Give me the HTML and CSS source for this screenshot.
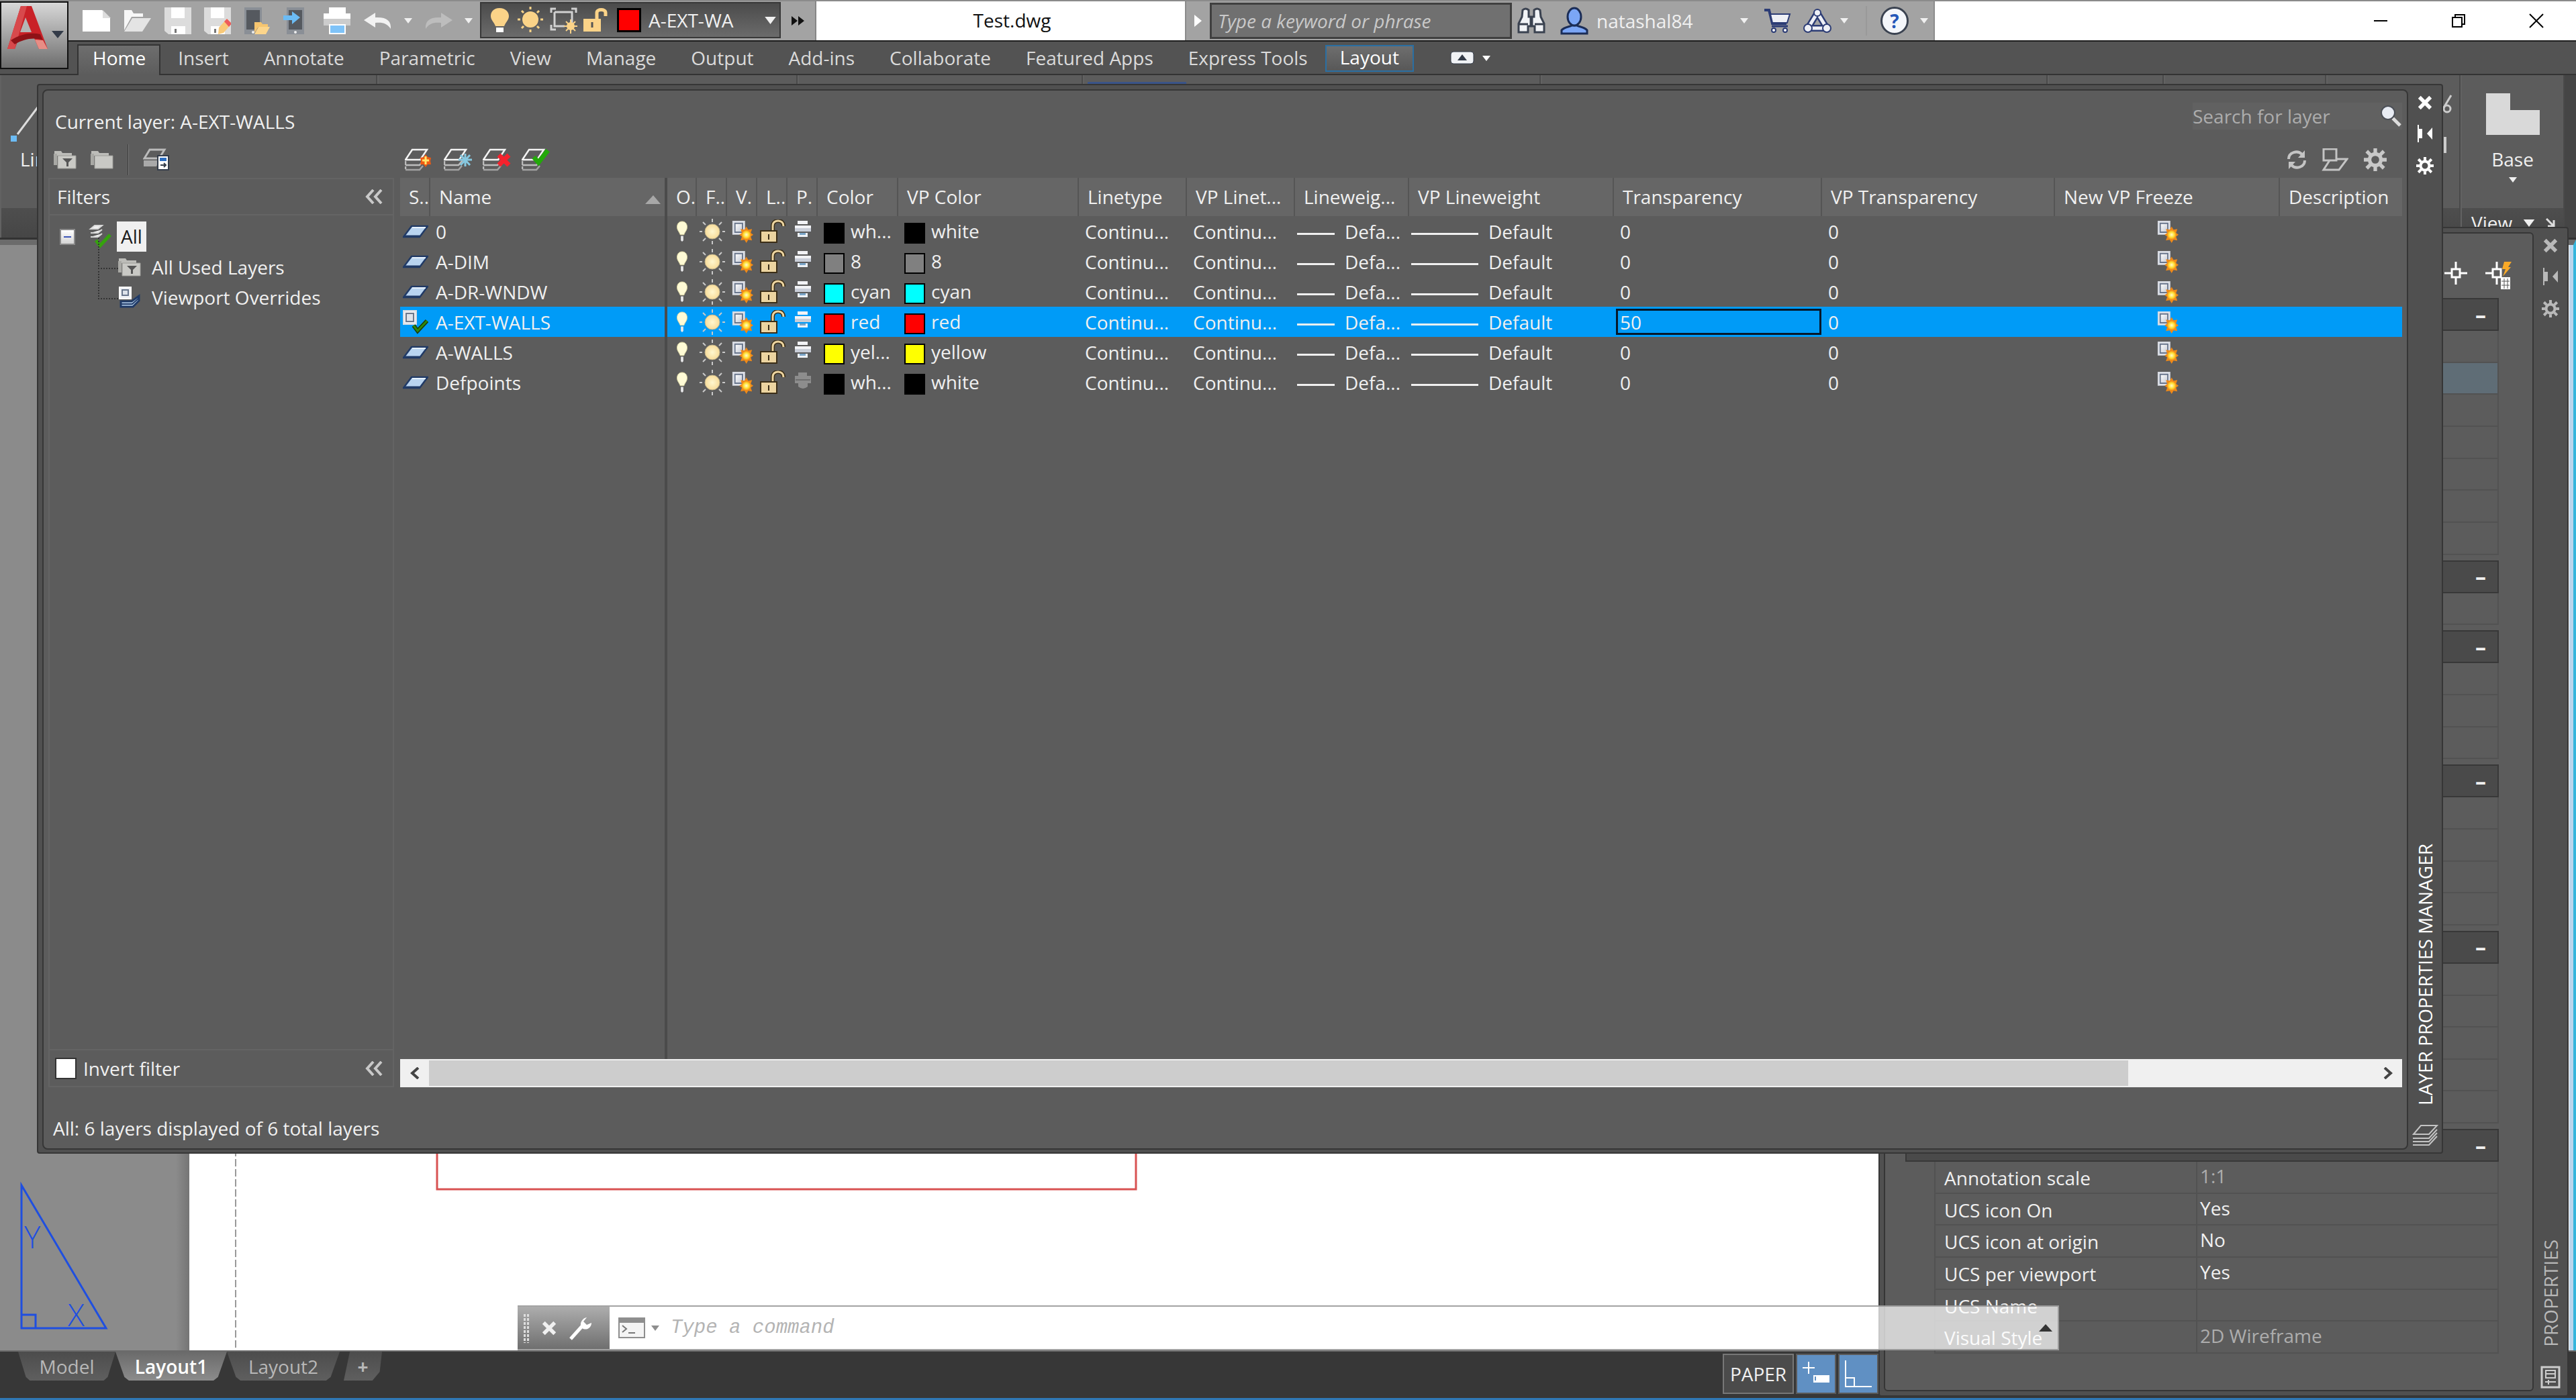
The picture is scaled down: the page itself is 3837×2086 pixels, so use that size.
FILE: index.html
```html
<!DOCTYPE html>
<html lang="en">
<head>
<meta charset="utf-8">
<title>Test.dwg</title>
<link rel="stylesheet" href="styles.css">
</head>
<body>
<svg class="sprite" aria-hidden="true">
  <defs>
    <radialGradient id="g-sun"><stop offset="0" stop-color="#fff7cf"/><stop offset="1" stop-color="#f8dc9a"/></radialGradient>
    <radialGradient id="g-fire"><stop offset="0" stop-color="#fffbd0"/><stop offset=".6" stop-color="#ffe135"/><stop offset="1" stop-color="#f59a1c"/></radialGradient>
    <linearGradient id="g-page" x1="0" y1="0" x2="1" y2="1"><stop offset="0" stop-color="#ffffff"/><stop offset="1" stop-color="#c4c9d4"/></linearGradient>
  </defs>
  <symbol id="i-layer" viewBox="0 0 38 20"><path d="M1 18L13 2H37L25 18Z" fill="#b9d4f0" stroke="#203a66" stroke-width="2.500"/><path d="M3 17H25" stroke="#203a66" stroke-width="3"/><path d="M14 4H34" stroke="#e6f1fc" stroke-width="2"/></symbol>
  <symbol id="i-current" viewBox="0 0 38 36"><path d="M1 1H20V21H1Z" fill="#eceef2" stroke="#d9dce2" stroke-width="2"/><path d="M5 5H16V17H5Z" fill="#dfe3ea" stroke="#6d788c" stroke-width="2"/><path d="M16 23L22 31L36 16" fill="none" stroke="#1d3a08" stroke-width="6"/><path d="M16 23L22 31L36 16" fill="none" stroke="#2f8a0c" stroke-width="3"/></symbol>
  <symbol id="i-bulb" viewBox="0 0 20 34"><path d="M10 1C4 1 2 6 2 10C2 15 6 18 7 22H13C14 18 18 15 18 10C18 6 16 1 10 1Z" fill="#fffbd6" stroke="#d8d2a0"/><path d="M8 24H12V31L10 33L8 31Z" fill="#e8e8ea"/></symbol>
  <symbol id="i-sun" viewBox="0 0 38 38"><g stroke="#c9c9c9" stroke-width="2"><path d="M19 0V5M19 33V38M0 19H4M34 19H38M5 5L9 9M29 29L33 33M5 33L9 29M29 9L33 5"/></g><circle cx="19" cy="19" r="11" fill="url(#g-sun)" stroke="#bdb08a"/></symbol>
  <symbol id="i-vp" viewBox="0 0 34 36"><path d="M2 2H20V22H2Z" fill="#eceef2" stroke="#d6dae2" stroke-width="2"/><path d="M5 5H17V19H5Z" fill="url(#g-page)" stroke="#68758c" stroke-width="2"/><path d="M23 10L26 15L32 14L30 20L34 23L30 26L32 32L26 31L23 36L20 31L14 32L16 26L12 23L16 20L14 14L20 15Z" fill="#f08a18"/><circle cx="23" cy="23" r="7" fill="url(#g-fire)"/></symbol>
  <symbol id="i-lock" viewBox="0 0 40 36"><path d="M20 17V10C20 4 24 2 28 2C33 2 36 5 36 10" fill="none" stroke="#3b2e17" stroke-width="6"/><path d="M20 17V10C20 4 24 2 28 2C33 2 36 5 36 10" fill="none" stroke="#ecd4a0" stroke-width="3"/><path d="M2 17H26V34H2Z" fill="#ecd4a0" stroke="#3b2e17" stroke-width="2"/><path d="M14 22V30" stroke="#3b2e17" stroke-width="2"/></symbol>
  <symbol id="i-plot" viewBox="0 0 26 26"><path d="M5 0H20V5H5ZM1 7H25V16H1Z" fill="#f2f3f6"/><path d="M1 11H25V16H1Z" fill="#c9ced8"/><path d="M5 18H20V24H5Z" fill="#eef2f6"/><path d="M8 18H17V21H8Z" fill="#7aa5c8"/></symbol>
  <symbol id="i-noplot" viewBox="0 0 26 26"><path d="M6 1H19V6H25V17H20V22Q13 28 6 22V17H1V6H6Z" fill="#8d8d8d"/><path d="M2 12H24" stroke="#6d6d6d" stroke-width="2"/></symbol>
  <symbol id="i-stack" viewBox="0 0 42 34"><g fill="none" stroke-width="2.500"><path d="M1 32H22L27 26" stroke="#a3a3a3"/><path d="M1 25H22L28 18" stroke="#bdbdbd"/><path d="M1 17L11 2H33L23 17Z" stroke="#f4f4f4"/><path d="M1 19V25M1 27V31" stroke="#bbb"/></g></symbol>
  <symbol id="i-folder" viewBox="0 0 34 28"><path d="M1 1H11L13 4H27V8H1Z" fill="#bdbdb9"/><path d="M0 5H5V22H0Z" fill="#a9a9a5"/><path d="M6 8H33V27H6Z" fill="#c9c9c5" stroke="#9c9c98"/></symbol>
  <symbol id="i-filter" viewBox="0 0 34 28"><use href="#i-folder"/><path d="M13 12H28L22 18V24H19V18Z" fill="#555"/></symbol>
  <symbol id="i-chev" viewBox="0 0 26 22"><path d="M12 1L3 11L12 21M24 1L15 11L24 21" fill="none" stroke="#c9c9c9" stroke-width="4"/></symbol>
  <symbol id="i-x" viewBox="0 0 24 24"><path d="M3 3L21 21M21 3L3 21" stroke="currentColor" stroke-width="6"/></symbol>
  <symbol id="i-pin" viewBox="0 0 24 26"><path d="M2 0V26" stroke="currentColor" stroke-width="2"/><path d="M3 6H8V20H3ZM23 4V22L15 13Z" fill="currentColor"/></symbol>
  <symbol id="i-gear" viewBox="0 0 32 32"><circle cx="16" cy="16" r="8" fill="none" stroke="currentColor" stroke-width="5"/><path d="M16 0V6M16 26V32M0 16H6M26 16H32M4 4L9 9M23 23L28 28M4 28L9 23M23 9L28 4" stroke="currentColor" stroke-width="5"/></symbol>
  <symbol id="i-down" viewBox="0 0 12 8"><path d="M0 0H12L6 8Z" fill="currentColor"/></symbol>
  <symbol id="i-save" viewBox="0 0 40 40"><path d="M0 0H40V40H6L0 35Z" fill="#dcdcdc"/><path d="M10 0H30V16H10ZM10 28H31V40H10Z" fill="#fff"/><path d="M15 32H18V38H15Z" fill="#777"/></symbol>
  <symbol id="i-phone" viewBox="0 0 40 40"><path d="M1 0H27V40H1Z" fill="#8a8f96"/><path d="M4 4H24V33H4Z" fill="#55595f"/><circle cx="14" cy="37" r="2" fill="#eee"/></symbol>
</svg>

<div class="app">
  <header class="titlebar">
    <div class="quick">
      <button class="ib" aria-label="New"><svg width="42" height="32" viewBox="0 0 42 32"><path d="M0 0H29L41 12V32H0Z" fill="#fff"/><path d="M30 0L42 12H30Z" fill="#ddd"/></svg></button>
      <button class="ib" aria-label="Open"><svg width="42" height="32" viewBox="0 0 42 32"><path d="M1 0H12L15 5H29V10H12L1 30Z" fill="#f7f7f7"/><path d="M13 12H41L28 32H1Z" fill="#e4e4e4"/></svg></button>
      <button class="ib" aria-label="Save"><svg width="40" height="40"><use href="#i-save"/></svg></button>
      <button class="ib" aria-label="Save as"><svg width="40" height="40" viewBox="0 0 40 40"><use href="#i-save"/><path d="M22 30L34 17L41 24L29 38L21 40Z" fill="#f9c978"/><path d="M30 21L34 17L41 24L37 29Z" fill="#ee5c5c"/></svg></button>
      <button class="ib" aria-label="Open from mobile"><svg width="40" height="40" viewBox="0 0 40 40"><use href="#i-phone"/><path d="M16 22H26L28 25H36V29H22L16 38Z" fill="#f6c56f"/><path d="M22 29H39L33 40H16Z" fill="#fcd58b"/></svg></button>
      <button class="ib" aria-label="Save to mobile"><svg width="40" height="40" viewBox="0 0 40 40"><use href="#i-phone" x="4"/><path d="M0 12H13V6L25 15L13 25V19H0Z" fill="#6cbcf5"/></svg></button>
      <button class="ib" aria-label="Plot"><svg width="42" height="40" viewBox="0 0 42 40"><path d="M9 0H34V12H9Z" fill="#fff"/><path d="M1 9H41V27H1Z" fill="#fff"/><path d="M1 17H41V27H1Z" fill="#ccc"/><path d="M9 25H34V40H9Z" fill="#fff"/><path d="M11 27H32V38H11Z" fill="#7fc3f8"/></svg></button>
      <button class="ib" aria-label="Undo"><svg width="42" height="24" viewBox="0 0 42 24"><path d="M0 11L17 0V7C34 6 41 12 40 24C34 15 27 14 17 15V22Z" fill="#f2f2f2"/></svg></button>
      <button class="ib mini" aria-label="Undo list"><svg width="12" height="8"><use href="#i-down"/></svg></button>
      <button class="ib" aria-label="Redo"><svg width="42" height="24" viewBox="0 0 42 24"><path d="M42 11L25 0V7C8 6 1 12 2 24C8 15 15 14 25 15V22Z" fill="#bdbdbd"/></svg></button>
      <button class="ib mini" aria-label="Redo list"><svg width="12" height="8"><use href="#i-down"/></svg></button>
    </div>
    <button class="layer-combo">
      <svg width="176" height="40" viewBox="0 0 176 40"><path d="M13 2C4 2 0 8 0 14C0 20 5 23 7 29H20C22 23 27 20 27 14C27 8 22 2 13 2Z" fill="#fbd388"/><path d="M8 31H19V38H8Z" fill="#fff"/><g transform="translate(59 19)"><circle r="12" fill="#fbd388"/><path d="M0-19V-15M0 15V19M-19 0H-15M15 0H19M-13-13L-10-10M13 13L10 10M-13 13L-10 10M13-13L10-10" stroke="#fbd388" stroke-width="3"/></g><path d="M90 9V3H97M120 3H127V9M90 27V34H97M95 8H121V24M95 8V29H110" fill="none" stroke="#d0d0d0" stroke-width="3"/><circle cx="119" cy="29" r="6" fill="#fbd388"/><path d="M119 19V40M109 29H129M112 22L126 36M126 22L112 36" stroke="#fbd388" stroke-width="2"/><path d="M158 20V9C158 3 171 3 171 9V14" fill="none" stroke="#fbd388" stroke-width="5"/><path d="M138 18H164V37H138Z" fill="#fbd388"/><path d="M151 23V31" stroke="#555" stroke-width="3"/></svg>
      <span class="big-swatch"></span><span class="combo-name">A-EXT-WA</span><svg class="combo-arrow" width="19" height="11"><use href="#i-down"/></svg>
    </button>
    <button class="ib more" aria-label="More"><svg width="20" height="14" viewBox="0 0 20 14"><path d="M0 0L9 7L0 14ZM10 0L19 7L10 14Z" fill="#111"/></svg></button>
    <h1 class="doc-title">Test.dwg</h1>
    <div class="infocenter">
      <svg width="11" height="18" viewBox="0 0 11 18"><path d="M0 0L11 9L0 18Z" fill="#fff"/></svg>
      <input class="help-search" type="text" placeholder="Type a keyword or phrase" aria-label="Type a keyword or phrase">
      <button class="ib" aria-label="Search"><svg width="42" height="40" viewBox="0 0 42 40"><g fill="#f1f3f6" stroke="#3a4250" stroke-width="3"><path d="M8 4Q12 0 17 4V14H20V28H16V37H2V24L7 14ZM34 4Q30 0 25 4V14H22V28H26V37H40V24L35 14Z"/><path d="M2 25H16M26 25H40"/></g></svg></button>
      <button class="user"><svg width="42" height="42" viewBox="0 0 42 42"><path d="M2 40V35C6 30 14 30 17 28H25C28 30 36 30 40 35V40Z" fill="#7ba6f6" stroke="#1b2d57" stroke-width="3"/><ellipse cx="21" cy="15" rx="10" ry="13" fill="#7ba6f6" stroke="#1b2d57" stroke-width="3"/></svg><span>natashal84</span><svg class="push" width="12" height="8"><use href="#i-down"/></svg></button>
      <button class="ib" aria-label="App store"><svg width="42" height="36" viewBox="0 0 42 36"><g stroke="#2c3c75" stroke-width="2"><path d="M1 2H8L13 22H34" fill="none" stroke-width="4"/><path d="M10 8H39L35 21H13Z" fill="#eef0f6"/><path d="M12 26H36" stroke-width="3"/><circle cx="15" cy="32" r="3" fill="#fff"/><circle cx="32" cy="32" r="3" fill="#fff"/></g></svg></button>
      <button class="ib pair" aria-label="Stay connected"><svg width="42" height="36" viewBox="0 0 42 36"><path d="M21 6L35 29H7Z" fill="none" stroke="#2c3c75" stroke-width="10" stroke-linejoin="round"/><path d="M21 6L35 29H7Z" fill="none" stroke="#eef0f6" stroke-width="5" stroke-linejoin="round"/><g fill="#eef0f6" stroke="#2c3c75" stroke-width="2"><circle cx="21" cy="6" r="5"/><circle cx="7" cy="29" r="6"/><circle cx="35" cy="29" r="6"/></g></svg><svg width="12" height="8"><use href="#i-down"/></svg></button>
      <i class="ic-sep"></i>
      <button class="help" aria-label="Help"><span>?</span><svg width="12" height="8"><use href="#i-down"/></svg></button>
    </div>
    <div class="window-buttons">
      <button class="ib" aria-label="Minimize"><svg width="22" height="22" viewBox="0 0 22 22"><path d="M1 11H21" stroke="#000" stroke-width="2"/></svg></button>
      <button class="ib" aria-label="Restore"><svg width="22" height="22" viewBox="0 0 22 22"><path d="M2 6H16V20H2ZM6 6V2H20V16H16" fill="none" stroke="#000" stroke-width="2"/></svg></button>
      <button class="ib" aria-label="Close"><svg width="22" height="22" viewBox="0 0 22 22"><path d="M1 1L21 21M21 1L1 21" stroke="#000" stroke-width="2"/></svg></button>
    </div>
  </header>

  <nav class="tabs">
    <a class="tab active" href="#home">Home</a><a class="tab" href="#insert">Insert</a><a class="tab" href="#annotate">Annotate</a><a class="tab" href="#parametric">Parametric</a><a class="tab" href="#view">View</a><a class="tab" href="#manage">Manage</a><a class="tab" href="#output">Output</a><a class="tab" href="#addins">Add-ins</a><a class="tab" href="#collaborate">Collaborate</a><a class="tab" href="#apps">Featured Apps</a><a class="tab" href="#express">Express Tools</a><a class="tab context" href="#layout">Layout</a>
    <button class="ribbon-toggle" aria-label="Minimize ribbon"><svg width="60" height="24" viewBox="0 0 60 24"><rect x="1" y="3" width="34" height="18" rx="4" fill="#f0f2f5" stroke="#333b48"/><path d="M11 16H25L18 7Z" fill="#333b48"/><path d="M48 9H60L54 17Z" fill="#fff"/></svg></button>
  </nav>

  <button class="app-menu" aria-label="Application menu"><svg width="98" height="98" viewBox="0 0 98 98"><path d="M29 5H45L69 69H56L49 53H26L20 69H9Z" fill="#c92127"/><path d="M29 5H38L20 69H9Z" fill="#d8494c"/><path d="M36 22L45 44H28Z" fill="#b5b5b5"/><path d="M14 56C30 46 45 44 58 47L62 56C48 51 34 54 20 62Z" fill="#8f1217"/><path d="M56 69L50 55L62 56L69 69Z" fill="#e78d85"/><path d="M75 42H93L84 53Z" fill="#333b48"/></svg></button>

  <section class="ribbon">
    <div class="panel draw"><svg width="60" height="64" viewBox="0 0 60 64"><path d="M10 52L40 12" stroke="#ddd" stroke-width="3"/><path d="M0 54H9V63H0Z" fill="#6cbcf5"/></svg><span>Line</span></div>
    <div class="panel"></div><div class="panel"></div><div class="panel layers"><i></i></div><div class="panel"></div><div class="panel"></div><div class="panel"></div>
    <div class="panel clip"><svg width="16" height="92" viewBox="0 0 16 92"><path d="M0 24L12 4" stroke="#ccc" stroke-width="3"/><circle cx="6" cy="24" r="5" fill="none" stroke="#ccc" stroke-width="3"/><path d="M1 66H5V90H1Z" fill="#ccc"/></svg></div>
    <div class="panel base"><svg width="80" height="62" viewBox="0 0 80 62"><path d="M0 0H36V25H80V62H0Z" fill="#d9d9d9"/></svg><span>Base</span><svg width="12" height="8"><use href="#i-down"/></svg><div class="panel-title">View <svg width="18" height="11"><use href="#i-down"/></svg><svg width="14" height="14" viewBox="0 0 14 14"><path d="M1 1L12 12M12 3V12H3" fill="none" stroke="#ddd" stroke-width="3"/></svg></div></div>
  </section>

  <main class="canvas">
    <div class="desk"><svg width="170" height="300" viewBox="0 0 170 300"><g fill="none" stroke="#1f4fe0" stroke-width="3"><path d="M32 54V267H158ZM32 247H53V267"/></g><g class="ucs"><text x="36" y="148">Y</text><text x="101" y="264">X</text></g></svg></div>
    <div class="paper"><svg width="1500" height="300" viewBox="0 0 1500 300"><path d="M69 0V300" stroke="#999" stroke-width="2" stroke-dasharray="11 4"/><path d="M369 0V60H1410V0" fill="none" stroke="#d85252" stroke-width="3"/></svg></div>
  </main>

  <footer class="statusbar">
    <div class="layout-tabs">
      <button class="ltab">Model</button><button class="ltab on">Layout1</button><button class="ltab">Layout2</button><button class="ltab plus">+</button>
    </div>
    <div class="status-tools">
      <button class="paper-btn">PAPER</button>
      <button class="blue" aria-label="Dynamic input"><svg width="44" height="40" viewBox="0 0 44 40"><path d="M11 2V20M2 11H20" stroke="#fff" stroke-width="2"/><path d="M18 22H42V33H18Z" fill="#fff"/><path d="M21 24V30" stroke="#6090c3" stroke-width="2"/></svg></button>
      <button class="blue" aria-label="Ortho mode"><svg width="44" height="40" viewBox="0 0 44 40"><path d="M3 0V39H42M3 26H16V39" fill="none" stroke="#fff" stroke-width="2"/></svg></button>
    </div>
  </footer>

  <aside class="palette properties">
    <div class="props-body">
      <div class="props-tools">
        <svg width="34" height="34" viewBox="0 0 34 34"><path d="M17 0V11M17 23V34M0 17H11M23 17H34M11 11H23V23H11Z" fill="none" stroke="#fff" stroke-width="3"/></svg>
        <svg width="42" height="44" viewBox="0 0 42 44"><path d="M17 0V11M17 23V34M0 17H11M11 11H23V23H11Z" fill="none" stroke="#fff" stroke-width="3"/><path d="M28 0H39L34 8H38L26 22L30 11H25Z" fill="#f8a928"/><path d="M23 23H37V41H23Z" fill="#fff"/><path d="M24 29H36M24 35H36M28 25V40M33 25V40" stroke="#555"/></svg>
      </div>
      <div class="props-list">
        <div class="sec"><button aria-label="Collapse">–</button></div>
        <div class="row"></div><div class="row hl"></div><div class="row"></div><div class="row"></div><div class="row"></div><div class="row"></div><div class="row"></div>
        <div class="sec"><button aria-label="Collapse">–</button></div>
        <div class="row"></div>
        <div class="sec"><button aria-label="Collapse">–</button></div>
        <div class="row"></div><div class="row"></div><div class="row"></div>
        <div class="sec"><button aria-label="Collapse">–</button></div>
        <div class="row"></div><div class="row"></div><div class="row"></div><div class="row"></div>
        <div class="sec"><button aria-label="Collapse">–</button></div>
        <div class="row"></div><div class="row"></div><div class="row"></div><div class="row"></div><div class="row"></div>
        <div class="sec"><button aria-label="Collapse">–</button></div>
        <div class="row"><span>Annotation scale</span><span class="dim">1:1</span></div>
        <div class="row"><span>UCS icon On</span><span>Yes</span></div>
        <div class="row"><span>UCS icon at origin</span><span>No</span></div>
        <div class="row"><span>UCS per viewport</span><span>Yes</span></div>
        <div class="row"><span>UCS Name</span><span></span></div>
        <div class="row"><span>Visual Style</span><span class="dim">2D Wireframe</span></div>
      </div>
    </div>
    <div class="side">
      <button class="ib" aria-label="Close"><svg width="24" height="22"><use href="#i-x"/></svg></button>
      <button class="ib" aria-label="Auto-hide"><svg width="24" height="26"><use href="#i-pin"/></svg></button>
      <button class="ib" aria-label="Options"><svg width="26" height="26"><use href="#i-gear"/></svg></button>
      <span class="side-title">PROPERTIES</span>
      <svg width="30" height="34" viewBox="0 0 30 34"><path d="M2 2H28V32H2Z" fill="none" stroke="#ccc" stroke-width="3"/><path d="M8 7H22V18H8ZM8 12H22M7 24H23M12 21V28" fill="none" stroke="#ccc" stroke-width="2"/></svg>
    </div>
  </aside>

  <form class="command">
    <div class="grip"><i class="dots"></i><svg width="24" height="22"><use href="#i-x"/></svg><svg width="36" height="36" viewBox="0 0 36 36"><path d="M3 34L20 15" stroke="#fff" stroke-width="5"/><path d="M27 2L22 8L27 13L34 10C34 18 26 22 20 18C15 12 20 3 27 2Z" fill="#fff"/></svg></div>
    <svg width="40" height="31" viewBox="0 0 40 31"><path d="M1 1H39V30H1Z" fill="#f4f4f4" stroke="#8e8e8e" stroke-width="2"/><path d="M1 1H39V8H1Z" fill="#8e8e8e"/><path d="M6 12L12 17L6 22M15 23H25" fill="none" stroke="#777" stroke-width="2"/></svg>
    <svg class="grey" width="12" height="8"><use href="#i-down"/></svg>
    <input type="text" placeholder="Type a command" aria-label="Command">
    <button type="button" class="ib" aria-label="History"><svg width="20" height="11" viewBox="0 0 20 11"><path d="M0 11H20L10 0Z" fill="#333"/></svg></button>
  </form>

  <section class="palette manager">
    <div class="mgr-body">
      <div class="mgr-top">
        <p>Current layer: A-EXT-WALLS</p>
        <label class="layer-search"><input type="text" placeholder="Search for layer" aria-label="Search for layer"><svg width="34" height="34" viewBox="0 0 34 34"><path d="M20 20L31 31" stroke="#ddd" stroke-width="5"/><circle cx="13" cy="12" r="10" fill="#e8ecf4" stroke="#4c5058" stroke-width="2"/></svg></label>
      </div>
      <div class="mgr-tools">
        <div class="tools-left">
          <button class="ib" aria-label="New property filter"><svg width="34" height="28"><use href="#i-filter"/></svg></button>
          <button class="ib" aria-label="New group filter"><svg width="34" height="28"><use href="#i-folder"/></svg></button>
          <i class="tool-sep"></i>
          <button class="ib" aria-label="Layer states"><svg width="42" height="34" viewBox="0 0 42 34"><path d="M10 2H32L24 15H2Z" fill="none" stroke="#bbb" stroke-width="3"/><path d="M1 18H24L20 27H1Z" fill="#a9a9a9"/><path d="M22 11H38V32H22Z" fill="#fff" stroke="#333c4a" stroke-width="2"/><path d="M25 14H35V19H25Z" fill="#2b6cc0"/><path d="M26 25H34M31 22L34 25L31 28" fill="none" stroke="#333c4a" stroke-width="2"/></svg></button>
        </div>
        <div class="tools-mid">
          <button class="ib" aria-label="New layer"><svg width="42" height="34" viewBox="0 0 42 34"><use href="#i-stack" width="42" height="34"/><path d="M31 9L34 13L39 14L38 19L39 24L34 24L31 28L28 24L23 24L24 19L23 14L28 13Z" fill="#ee5a12"/><path d="M31 12V24M26 18H36" stroke="#ffe66b" stroke-width="3"/></svg></button>
          <button class="ib" aria-label="New frozen layer"><svg width="42" height="34" viewBox="0 0 42 34"><use href="#i-stack" width="42" height="34"/><path d="M32 8V27M22 17H42M25 10L39 25M39 10L25 25" stroke="#86c8e0" stroke-width="3"/></svg></button>
          <button class="ib" aria-label="Delete layer"><svg width="42" height="34" viewBox="0 0 42 34"><use href="#i-stack" width="42" height="34"/><path d="M24 10L39 25M39 10L24 25" stroke="#f5222d" stroke-width="7"/></svg></button>
          <button class="ib" aria-label="Set current"><svg width="42" height="34" viewBox="0 0 42 34"><use href="#i-stack" width="42" height="34"/><path d="M18 13L25 21L39 3" fill="none" stroke="#23a80a" stroke-width="7"/></svg></button>
        </div>
        <div class="tools-right">
          <button class="ib" aria-label="Refresh"><svg width="30" height="30" viewBox="0 0 30 30"><path d="M3 14C3 4 16 0 23 7M27 16C27 26 14 30 7 23" fill="none" stroke="#c4c4c4" stroke-width="4"/><path d="M27 1V12H17ZM3 29V18H13Z" fill="#c4c4c4"/></svg></button>
          <button class="ib" aria-label="Viewport overrides"><svg width="40" height="34" viewBox="0 0 40 34"><path d="M3 1H22V18H3ZM22 16H38L26 32H3L12 18" fill="none" stroke="#c4c4c4" stroke-width="3"/></svg></button>
          <button class="ib light" aria-label="Settings"><svg width="36" height="34"><use href="#i-gear"/></svg></button>
        </div>
      </div>
      <div class="mgr-main">
        <div class="filters">
          <div class="f-head"><span>Filters</span><button class="ib" aria-label="Collapse filters"><svg width="28" height="22"><use href="#i-chev"/></svg></button></div>
          <ul class="tree">
            <li><i class="expander"></i><svg width="36" height="36" viewBox="0 0 36 36"><path d="M3 6L9 1H20L14 6ZM3 12H14L20 7M3 18H14L20 13" fill="#f0f0f0" stroke="#d8d8d8" stroke-width="2"/><path d="M11 23L17 31L32 15" fill="none" stroke="#35a30d" stroke-width="5"/></svg><b>All</b></li>
            <li class="child"><svg width="34" height="28"><use href="#i-filter"/></svg><span>All Used Layers</span></li>
            <li class="child"><svg width="34" height="34" viewBox="0 0 34 34"><path d="M2 2H19V19H2Z" fill="#eef0f4" stroke="#fff" stroke-width="2"/><path d="M6 6H15V14H6Z" fill="#dde2ea" stroke="#68758c" stroke-width="2"/><path d="M4 23H20L31 15V22L22 31H4Z" fill="#b9d4f0" stroke="#203a66" stroke-width="3"/><path d="M4 27H21L31 18" fill="none" stroke="#203a66" stroke-width="2"/></svg><span>Viewport Overrides</span></li>
          </ul>
          <div class="f-foot"><label><input type="checkbox">Invert filter</label><button class="ib" aria-label="Collapse tree"><svg width="28" height="22"><use href="#i-chev"/></svg></button></div>
        </div>
        <div class="grid">
          <div class="table-wrap">
          <table>
            <colgroup><col class="c45"><col class="c-name"><col class="c44"><col class="c45"><col class="c45"><col class="c45"><col class="c45"><col class="c-color"><col class="c-vpcolor"><col class="c-lt"><col class="c-lt"><col class="c-lw"><col class="c-vplw"><col class="c-tr"><col class="c-vptr"><col class="c-frz"><col></colgroup>
            <thead><tr><th>S..</th><th class="name">Name<svg width="23" height="13" viewBox="0 0 23 13"><path d="M0 13H23L12 0Z" fill="#a8a8a8"/></svg></th><th>O.</th><th>F..</th><th>V.</th><th>L..</th><th>P.</th><th>Color</th><th>VP Color</th><th>Linetype</th><th>VP Linet...</th><th>Lineweig...</th><th>VP Lineweight</th><th>Transparency</th><th>VP Transparency</th><th>New VP Freeze</th><th>Description</th></tr></thead>
            <tbody>
            <tr><td class="ic"><svg width="38" height="20"><use href="#i-layer"/></svg></td><td class="name">0</td><td class="ic"><svg width="20" height="32"><use href="#i-bulb"/></svg></td><td class="ic"><svg width="38" height="38"><use href="#i-sun"/></svg></td><td class="ic"><svg width="34" height="34"><use href="#i-vp"/></svg></td><td class="ic"><svg width="40" height="36"><use href="#i-lock"/></svg></td><td class="ic up"><svg width="26" height="26"><use href="#i-plot"/></svg></td><td><i class="sw black"></i>wh...</td><td><i class="sw black"></i>white</td><td>Continu...</td><td>Continu...</td><td><i class="ln"></i>Defa...</td><td><i class="ln long"></i>Default</td><td>0</td><td>0</td><td class="ic"><svg width="34" height="34"><use href="#i-vp"/></svg></td><td></td></tr>
            <tr><td class="ic"><svg width="38" height="20"><use href="#i-layer"/></svg></td><td class="name">A-DIM</td><td class="ic"><svg width="20" height="32"><use href="#i-bulb"/></svg></td><td class="ic"><svg width="38" height="38"><use href="#i-sun"/></svg></td><td class="ic"><svg width="34" height="34"><use href="#i-vp"/></svg></td><td class="ic"><svg width="40" height="36"><use href="#i-lock"/></svg></td><td class="ic up"><svg width="26" height="26"><use href="#i-plot"/></svg></td><td><i class="sw gray"></i>8</td><td><i class="sw gray"></i>8</td><td>Continu...</td><td>Continu...</td><td><i class="ln"></i>Defa...</td><td><i class="ln long"></i>Default</td><td>0</td><td>0</td><td class="ic"><svg width="34" height="34"><use href="#i-vp"/></svg></td><td></td></tr>
            <tr><td class="ic"><svg width="38" height="20"><use href="#i-layer"/></svg></td><td class="name">A-DR-WNDW</td><td class="ic"><svg width="20" height="32"><use href="#i-bulb"/></svg></td><td class="ic"><svg width="38" height="38"><use href="#i-sun"/></svg></td><td class="ic"><svg width="34" height="34"><use href="#i-vp"/></svg></td><td class="ic"><svg width="40" height="36"><use href="#i-lock"/></svg></td><td class="ic up"><svg width="26" height="26"><use href="#i-plot"/></svg></td><td><i class="sw cyan"></i>cyan</td><td><i class="sw cyan"></i>cyan</td><td>Continu...</td><td>Continu...</td><td><i class="ln"></i>Defa...</td><td><i class="ln long"></i>Default</td><td>0</td><td>0</td><td class="ic"><svg width="34" height="34"><use href="#i-vp"/></svg></td><td></td></tr>
            <tr class="selected"><td class="ic"><svg width="38" height="36"><use href="#i-current"/></svg></td><td class="name">A-EXT-WALLS</td><td class="ic"><svg width="20" height="32"><use href="#i-bulb"/></svg></td><td class="ic"><svg width="38" height="38"><use href="#i-sun"/></svg></td><td class="ic"><svg width="34" height="34"><use href="#i-vp"/></svg></td><td class="ic"><svg width="40" height="36"><use href="#i-lock"/></svg></td><td class="ic up"><svg width="26" height="26"><use href="#i-plot"/></svg></td><td><i class="sw red"></i>red</td><td><i class="sw red"></i>red</td><td>Continu...</td><td>Continu...</td><td><i class="ln"></i>Defa...</td><td><i class="ln long"></i>Default</td><td class="edit"><input type="text" value="50" aria-label="Transparency"></td><td>0</td><td class="ic"><svg width="34" height="34"><use href="#i-vp"/></svg></td><td></td></tr>
            <tr><td class="ic"><svg width="38" height="20"><use href="#i-layer"/></svg></td><td class="name">A-WALLS</td><td class="ic"><svg width="20" height="32"><use href="#i-bulb"/></svg></td><td class="ic"><svg width="38" height="38"><use href="#i-sun"/></svg></td><td class="ic"><svg width="34" height="34"><use href="#i-vp"/></svg></td><td class="ic"><svg width="40" height="36"><use href="#i-lock"/></svg></td><td class="ic up"><svg width="26" height="26"><use href="#i-plot"/></svg></td><td><i class="sw yellow"></i>yel...</td><td><i class="sw yellow"></i>yellow</td><td>Continu...</td><td>Continu...</td><td><i class="ln"></i>Defa...</td><td><i class="ln long"></i>Default</td><td>0</td><td>0</td><td class="ic"><svg width="34" height="34"><use href="#i-vp"/></svg></td><td></td></tr>
            <tr><td class="ic"><svg width="38" height="20"><use href="#i-layer"/></svg></td><td class="name">Defpoints</td><td class="ic"><svg width="20" height="32"><use href="#i-bulb"/></svg></td><td class="ic"><svg width="38" height="38"><use href="#i-sun"/></svg></td><td class="ic"><svg width="34" height="34"><use href="#i-vp"/></svg></td><td class="ic"><svg width="40" height="36"><use href="#i-lock"/></svg></td><td class="ic up"><svg width="26" height="26"><use href="#i-noplot"/></svg></td><td><i class="sw black"></i>wh...</td><td><i class="sw black"></i>white</td><td>Continu...</td><td>Continu...</td><td><i class="ln"></i>Defa...</td><td><i class="ln long"></i>Default</td><td>0</td><td>0</td><td class="ic"><svg width="34" height="34"><use href="#i-vp"/></svg></td><td></td></tr>
            </tbody>
          </table>
          </div>
          <div class="hscroll">
            <button class="ib" aria-label="Scroll left"><svg width="14" height="18" viewBox="0 0 14 18"><path d="M12 1L3 9L12 17" fill="none" stroke="#444" stroke-width="4"/></svg></button>
            <div class="track"><i class="thumb"></i></div>
            <button class="ib" aria-label="Scroll right"><svg width="14" height="18" viewBox="0 0 14 18"><path d="M2 1L11 9L2 17" fill="none" stroke="#444" stroke-width="4"/></svg></button>
          </div>
        </div>
      </div>
      <p class="mgr-status">All: 6 layers displayed of 6 total layers</p>
    </div>
    <div class="side">
      <button class="ib" aria-label="Close"><svg width="24" height="22"><use href="#i-x"/></svg></button>
      <button class="ib" aria-label="Auto-hide"><svg width="24" height="26"><use href="#i-pin"/></svg></button>
      <button class="ib" aria-label="Options"><svg width="26" height="26"><use href="#i-gear"/></svg></button>
      <span class="side-title">LAYER PROPERTIES MANAGER</span>
      <svg width="40" height="34" viewBox="0 0 40 34"><path d="M3 15L14 2H38L26 15ZM2 21H26L38 8M2 26H26L38 13M2 31H26L38 18" fill="none" stroke="#c4c4c4" stroke-width="2"/></svg>
    </div>
  </section>
</div>
</body>
</html>
```
FILE: styles.css
```css
* { box-sizing: border-box; }
body { margin: 0; font: 28px/36px "Open Sans", "Noto Sans", sans-serif; color: #f0f0f0; background: #373737; }
button, input { font: inherit; color: inherit; }
button { background: none; border: 0; padding: 0; }
input { border: 0; outline: 0; min-width: 0; }
svg { display: block; flex: none; }
p, h1, ul { margin: 0; padding: 0; }
i { font-style: normal; flex: none; }
.sprite { position: absolute; width: 0; height: 0; }
.ib { display: flex; align-items: center; justify-content: center; flex: none; }
.app { position: relative; display: flex; flex-direction: column; height: 100vh; border-bottom: 3px solid #2f78b5; overflow: hidden; }

/* Title bar */
.titlebar { display: flex; height: 62px; flex: none; background: #a3a3a3; border-top: 2px solid #8b8b8b; border-bottom: 2px solid #1f1f1f; }
.quick { display: flex; align-items: center; gap: 19px; padding: 0 10px 0 123px; width: 715px; }
.quick .mini { margin: 0 -1px; }
.layer-combo { display: flex; align-items: center; width: 448px; margin: 1px 0 3px; padding: 0 4px 0 14px; border: 2px solid #383838; background: linear-gradient(#4b4b4b, #6b6b6b); }
.big-swatch { width: 36px; height: 36px; margin-left: 12px; background: #f00; border: 3px solid #000; }
.combo-name { margin-left: 11px; }
.combo-arrow { margin-left: auto; }
.more { width: 53px; border-right: 2px solid #868686; }
.doc-title { flex: 0 1 549px; background: #fff; color: #111; font-size: 28px; font-weight: 400; line-height: 56px; text-align: center; text-indent: 34px; }
.infocenter { display: flex; align-items: center; flex: none; width: 1117px; padding-left: 12px; gap: 12px; border-left: 2px solid #8b8b8b; border-right: 2px solid #8b8b8b; }
.help-search { width: 450px; height: 54px; padding: 0 9px; margin-right: -4px; background: #707070; border: 3px solid #3f3f3f; font-style: italic; }
.help-search::placeholder { color: #c9c9c9; opacity: 1; }
.user { display: flex; align-items: center; gap: 12px; width: 280px; margin: 0 11px 0 5px; }
.user .push { margin-left: auto; }
.infocenter > .ib { margin-right: 5px; }
.pair { gap: 13px; }
.ic-sep { width: 2px; height: 44px; margin: 0 8px 0 9px; background: #999; }
.help { display: flex; align-items: center; gap: 17px; }
.help span { width: 42px; height: 42px; border: 3px solid #3a4250; border-radius: 50%; background: #f4f6fa; color: #2457b8; font-weight: 700; line-height: 36px; }
.window-buttons { flex: 1; display: flex; align-items: center; justify-content: flex-end; gap: 94px; padding-right: 48px; background: #fff; }

/* Ribbon */
.tabs { display: flex; align-items: flex-end; height: 50px; flex: none; padding-left: 115px; background: #535353; border-bottom: 2px solid #333; }
.tab { padding: 0 24px; height: 44px; line-height: 36px; color: #dadada; text-decoration: none; border: 2px solid transparent; border-bottom: 0; white-space: nowrap; }
.tab.active { margin-bottom: -2px; height: 46px; color: #fff; padding: 0 20px 0 21px; background: linear-gradient(#6e6e6e, #5c5c5c); border-color: #333; }
.tab.context { height: 40px; margin-bottom: 3px; line-height: 32px; padding: 0 20px; color: #fff; background: linear-gradient(#6e6e6e, #585858); border: 2px solid #2a6fa3; }
.ribbon-toggle { margin: 0 0 12px 54px; }
.app-menu { position: absolute; left: 0; top: 2px; width: 102px; height: 101px; border: 2px solid #111; background: linear-gradient(#d8d8d8, #8e8e8e 70%, #6d6d6d); }
.ribbon { display: grid; grid-template-columns: 562fr 626fr 425fr 682fr 755fr 173fr 242fr 200fr 155fr; height: 245px; flex: none; padding-right: 17px; background: #454545; border-bottom: 3px solid #333; }
.panel { border-right: 2px solid #4a4a4a; border-left: 2px solid #626262; background: linear-gradient(#5c5c5c 198px, #4e4e4e 198px, #464646); }
.draw { padding: 36px 0 0 14px; }
.draw span { margin-left: 14px; line-height: 50px; }
.layers { padding: 10px 0 0 5px; }
.layers i { display: block; width: 147px; height: 40px; background: #3a5488; }
.clip { display: flex; justify-content: flex-end; padding: 26px 8px 0 0; }
.base { display: flex; flex-direction: column; align-items: center; padding-top: 27px; }
.base > span { margin: 18px 0 9px; }
.panel-title { display: flex; align-items: center; gap: 16px; width: 100%; padding-left: 14px; margin-top: 42px; }

/* Drawing area */
.canvas { display: flex; flex: 1; min-height: 0; border-top: 8px solid #6b6b6b; border-right: 4px solid #35b5dc; background: #bcd6ec; padding-right: 6px; }
.desk { display: flex; align-items: flex-end; width: 282px; background: linear-gradient(90deg, #8b8b8b 262px, #757575); }
.ucs { fill: #1f4fe0; font: 300 46px "Open Sans", sans-serif; }
.paper { flex: 1; display: flex; align-items: flex-end; background: #fff; }

.statusbar { display: flex; justify-content: space-between; height: 71px; flex: none; background: #373737; border-top: 2px solid #6a6a6a; }
.layout-tabs { display: flex; padding-left: 27px; }
.ltab { width: 145px; height: 43px; color: #b8b8b8; background: linear-gradient(#4c4c4c, #5f5f5f); clip-path: polygon(0 0, 100% 0, 92% 88%, 88% 100%, 12% 100%, 8% 88%); line-height: 40px; }
.ltab.on { width: 166px; color: #fff; font-weight: 600; background: linear-gradient(#6a6a6a, #8c8c8c); }
.ltab.on + .ltab { width: 168px; }
.ltab.plus { width: 57px; margin-left: 6px; font-weight: 700; clip-path: polygon(16% 0, 100% 0, 94% 70%, 75% 100%, 0 100%); }
.status-tools { display: flex; gap: 3px; width: 1271px; padding: 3px 0; }
.status-tools button { border: 2px solid #5a5a5a; height: 60px; width: 60px; display: flex; align-items: center; justify-content: center; }
.status-tools .paper-btn { width: 106px; background: #4b4b4b; border-color: #777; }
.status-tools .blue { background: #6090c3; }

/* Floating palettes */
.palette { position: absolute; display: flex; background: #505050; border: 2px solid #363636; border-radius: 4px; }
.side { display: flex; flex-direction: column; align-items: center; width: 50px; flex: none; }
.side-title { margin: auto 0 6px; writing-mode: vertical-rl; transform: rotate(180deg); white-space: nowrap; line-height: 34px; }
.properties { left: 2798px; right: 11px; top: 338px; bottom: 2px; padding: 6px 0 6px 6px; }
.properties .side { color: #b9b9b9; padding: 9px 0 4px; gap: 22px; }
.props-body { flex: 1; display: flex; flex-direction: column; padding: 42px 50px 54px 30px; background: #5c5c5c; border: 2px solid #363636; border-radius: 6px; }
.props-tools { display: flex; justify-content: flex-end; gap: 27px; height: 46px; margin-right: -22px; }
.props-list { flex: 1; display: flex; flex-direction: column; }
.sec { display: flex; align-items: center; justify-content: flex-end; height: 49px; flex: none; margin-top: 8px; padding-right: 16px; background: #4a4a4a; border: 2px solid #383838; }
.sec button { width: 18px; font-weight: 700; font-size: 32px; }
.row { display: grid; grid-template-columns: 388px 1fr; flex: 1 1 0; min-height: 0; margin-left: 43px; border: solid #525252; border-width: 0 2px 2px; }
.row span { padding-left: 13px; line-height: 48px; }
.row span + span { padding-left: 4px; line-height: 42px; border-left: 2px solid #525252; }
.row .dim { color: #adadad; }
.hl { background: #5f6d76; }

.command { position: absolute; left: 771px; right: 770px; bottom: 71px; height: 67px; display: flex; align-items: center; gap: 9px; padding-right: 8px; background: rgba(255, 255, 255, .72); border: solid rgba(140, 140, 140, .8); border-width: 2px 2px 2px 0; }
.grip { display: flex; align-items: center; gap: 17px; align-self: stretch; width: 137px; padding-left: 8px; margin-right: 4px; background: linear-gradient(#adadad, #6f6f6f); }
.dots { width: 10px; height: 44px; background: radial-gradient(circle, #ddd 2px, transparent 2px) 0 0 / 5px 6px; }
.grey { color: #8e8e8e; }
.command input { flex: 1; margin-left: 8px; padding: 0; background: none; font: italic 29px/36px "Liberation Mono", monospace; color: #333; }
.command input::placeholder { color: #b4b4b4; opacity: 1; }

.manager { left: 55px; right: 198px; top: 125px; bottom: 364px; padding: 6px 0 4px 6px; }
.manager .side { color: #fff; padding: 9px 0 4px; gap: 22px; }
.mgr-body { flex: 1; min-width: 0; display: flex; flex-direction: column; padding: 18px 7px 0; background: #5c5c5c; border: 2px solid #363636; border-radius: 8px; }
.mgr-top { display: flex; justify-content: space-between; align-items: center; height: 40px; padding-left: 10px; }
.mgr-top p { padding-top: 16px; }
.layer-search { display: flex; align-items: center; width: 312px; height: 40px; background: #616161; }
.layer-search input { flex: 1; padding: 0; background: none; }
.layer-search input::placeholder { color: #adadad; opacity: 1; }
.mgr-tools { display: flex; align-items: center; height: 72px; padding-top: 18px; }
.tools-left { display: flex; align-items: center; gap: 21px; width: 531px; padding-left: 8px; }
.tool-sep { width: 2px; height: 46px; background: #3c3c3c; border-right: 1px solid #777; }
.tools-mid { display: flex; gap: 16px; }
.tools-right { display: flex; align-items: center; gap: 22px; margin-left: auto; padding-right: 22px; }
.light { color: #c8c8c8; }
.mgr-main { display: flex; gap: 9px; flex: 1; min-height: 0; }
.filters { display: flex; flex-direction: column; width: 515px; border: 2px solid #646464; }
.f-head, .f-foot { display: flex; align-items: center; justify-content: space-between; height: 55px; padding: 0 14px 0 11px; border-bottom: 2px solid #646464; }
.f-head { height: 54px; }
.f-foot { padding-left: 8px; border-bottom: 0; border-top: 2px solid #646464; }
.f-foot label { display: flex; align-items: center; gap: 10px; }
.f-foot input { appearance: none; width: 32px; height: 32px; margin: 0; background: #fff; border: 2px solid #333; }
.tree { flex: 1; list-style: none; padding: 9px 0 0 15px; }
.tree li { display: flex; align-items: center; height: 45px; }
.tree b { font-weight: 400; background: #f0f0f0; color: #1a1a1a; height: 45px; line-height: 45px; padding: 0 6px; margin-left: 6px; }
.expander { display: flex; align-items: center; width: 23px; height: 24px; margin-right: 20px; background: linear-gradient(#fff, #d4d4d4); border: 2px solid #8a8a8a; }
.expander::before { content: ""; width: 11px; height: 2px; margin: auto; background: #3c55b8; }
.tree .child { gap: 16px; padding-left: 57px; }
.tree .child::before { content: ""; width: 28px; height: 45px; margin: -40px -16px 0 0; border: dotted #333; border-width: 0 0 2px 2px; }

.grid { flex: 1; min-width: 0; display: flex; flex-direction: column; }
.table-wrap { flex: 1; overflow: hidden; background: linear-gradient(#4b4b4b, #4b4b4b) 394px 0 / 4px 100% no-repeat; }
table { width: 100%; table-layout: fixed; border-collapse: separate; border-spacing: 0; }
th, td { height: 45px; padding: 0 0 0 9px; text-align: left; font-weight: 400; line-height: 34px; white-space: nowrap; overflow: hidden; }
th { height: 57px; padding: 0 0 2px 13px; background: #666; border-right: 2px solid #555; }
th:last-child { border-right: 0; }
th.name, td.name { border-right: 4px solid #4b4b4b; }
td.name { padding-left: 8px; }
th.name svg { float: right; margin: 15px 6px 0 0; }
.c44 { width: 44px; } .c45 { width: 45px; } .c-name { width: 353px; } .c-color { width: 120px; } .c-vpcolor { width: 269px; }
.c-lt { width: 161px; } .c-lw { width: 170px; } .c-vplw { width: 305px; } .c-tr { width: 310px; } .c-vptr { width: 347px; } .c-frz { width: 335px; }
.ic { padding: 0; }
.ic svg { margin: 0 auto; }
.up svg { margin-bottom: 6px; }
.selected td { background: #009bf7; }
.edit { padding: 0 0 0 3px; }
.edit input { display: block; width: 306px; height: 39px; padding: 0 3px; background: none; border: 3px solid #06182a; }
.sw { display: inline-block; width: 31px; height: 31px; margin-right: 9px; border: 2px solid #000; vertical-align: middle; }
.black { background: #000; } .gray { background: #808080; } .cyan { background: #0ff; } .red { background: #f00; } .yellow { background: #ff0; }
.ln { display: inline-block; width: 56px; height: 3px; margin: 0 15px 0 -6px; background: #f0f0f0; vertical-align: middle; }
.long { width: 100px; }
.hscroll { display: flex; height: 42px; flex: none; background: #f0f0f0; }
.hscroll > button { width: 43px; }
.track { flex: 1; padding: 2px 0; }
.thumb { display: block; height: 38px; margin-right: 365px; background: #cdcdcd; }
.mgr-status { height: 91px; padding: 43px 0 0 7px; }
```
